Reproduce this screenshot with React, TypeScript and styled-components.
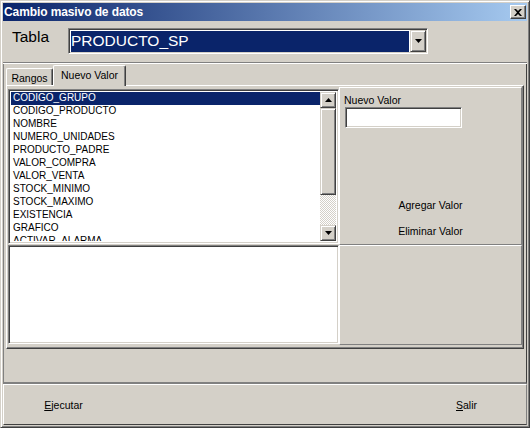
import React from 'react';
import styled, { createGlobalStyle } from 'styled-components';

const FACE = '#d4d0c8';
const SHADOW = '#808080';
const DARK = '#404040';
const LIGHT = '#ffffff';
const NAVY = '#0a246a';
const FONT = '"Liberation Sans", Arial, sans-serif';

const GlobalStyle = createGlobalStyle`
  html, body { margin: 0; padding: 0; background: ${FACE}; }
  body { font-family: ${FONT}; }
  * { box-sizing: border-box; }
`;

const Window = styled.div`
  width: 530px;
  height: 428px;
  background: ${FACE};
  border: 1px solid;
  border-color: ${FACE} ${DARK} ${DARK} ${FACE};
  box-shadow: inset 1px 1px ${LIGHT}, inset -1px -1px ${SHADOW};
  padding: 2px;
  display: flex;
  flex-direction: column;
`;

const TitleBar = styled.div`
  height: 18px;
  flex: none;
  display: flex;
  align-items: center;
  justify-content: space-between;
  padding: 0 1px 0 1px;
  background: linear-gradient(to right, ${NAVY}, #a6caf0);
`;

const TitleText = styled.span`
  color: #fff;
  font: bold 12px ${FONT};
  letter-spacing: -0.1px;
`;

const CloseButton = styled.div`
  width: 16px;
  height: 14px;
  background: ${FACE};
  border: 1px solid;
  border-color: ${LIGHT} ${DARK} ${DARK} ${LIGHT};
  box-shadow: inset -1px -1px ${SHADOW};
  display: flex;
  align-items: center;
  justify-content: center;
`;

const Client = styled.div`
  flex: 1;
  margin-top: 1px;
  display: flex;
  flex-direction: column;
`;

const TopSection = styled.div`
  height: 40px;
  flex: none;
  display: flex;
  align-items: flex-start;
  padding: 6px 0 0 9px;
`;

const BigLabel = styled.div`
  width: 56px;
  height: 26px;
  line-height: 28px;
  font: 15.5px ${FONT};
  color: #000;
`;

const Combo = styled.div`
  width: 360px;
  height: 26px;
  display: flex;
  border: 1px solid;
  border-color: ${SHADOW} ${LIGHT} ${LIGHT} ${SHADOW};
  box-shadow: inset 1px 1px ${DARK}, inset -1px -1px ${FACE};
  padding: 1px;
  background: #fff;
`;

const ComboField = styled.div`
  flex: 1;
  margin: 1px 1px 0 1px;
  background: ${NAVY};
  color: #fff;
  font: 15.5px ${FONT};
  line-height: 20px;
  padding-left: 0;
  white-space: nowrap;
`;

const RaisedButton = styled.div<{ $w?: number; $h?: number }>`
  width: ${(p) => p.$w ?? 16}px;
  height: ${(p) => (p.$h ? `${p.$h}px` : 'auto')};
  flex: none;
  background: ${FACE};
  border: 1px solid;
  border-color: ${FACE} ${DARK} ${DARK} ${FACE};
  box-shadow: inset 1px 1px ${LIGHT}, inset -1px -1px ${SHADOW};
  display: flex;
  align-items: center;
  justify-content: center;
`;

const Groove = styled.div`
  height: 2px;
  flex: none;
  border-top: 1px solid ${SHADOW};
  border-bottom: 1px solid ${LIGHT};
`;

const Middle = styled.div`
  height: 320px;
  flex: none;
  display: flex;
  flex-direction: column;
  border-left: 1px solid ${SHADOW};
  border-right: 1px solid ${DARK};
  border-bottom: 2px solid ${SHADOW};
  padding: 1px 1px 0 2px;
`;

const TabStrip = styled.div`
  height: 20px;
  flex: none;
  display: flex;
  align-items: flex-end;
  position: relative;
  z-index: 1;
`;

const Tab = styled.div<{ $active?: boolean; $w: number }>`
  width: ${(p) => p.$w}px;
  height: ${(p) => (p.$active ? 21 : 17)}px;
  margin-bottom: ${(p) => (p.$active ? -1 : 0)}px;
  background: ${FACE};
  border-top: 1px solid ${LIGHT};
  border-left: 1px solid ${LIGHT};
  border-right: 1px solid ${DARK};
  border-top-left-radius: 2px;
  border-top-right-radius: 2px;
  box-shadow: inset -1px 0 ${SHADOW};
  font: 10.5px ${FONT};
  color: #000;
  display: flex;
  justify-content: center;
  padding-top: 3px;
`;

const TabPanel = styled.div`
  width: 518px;
  height: 264px;
  flex: none;
  border: 1px solid;
  border-color: ${LIGHT} ${DARK} ${DARK} ${LIGHT};
  box-shadow: inset -1px -1px ${SHADOW};
  padding: 1px 2px 2px 1px;
  display: grid;
  grid-template-columns: 331px 183px;
  grid-template-rows: 158px 100px;
`;

const ListBox = styled.div`
  margin-top: 2px;
  height: 155px;
  display: flex;
  background: #fff;
  border: 1px solid;
  border-color: ${SHADOW} ${LIGHT} ${LIGHT} ${SHADOW};
  box-shadow: inset 1px 1px ${DARK}, inset -1px -1px ${FACE};
  padding: 2px;
`;

const ListItems = styled.div`
  flex: 1;
  overflow: hidden;
`;

const ListItem = styled.div<{ $selected?: boolean }>`
  height: 13px;
  line-height: 13px;
  padding-left: 2px;
  font: 10px ${FONT};
  white-space: nowrap;
  color: ${(p) => (p.$selected ? '#fff' : '#000')};
  background: ${(p) => (p.$selected ? NAVY : 'transparent')};
`;

const ScrollBar = styled.div`
  width: 16px;
  flex: none;
  display: flex;
  flex-direction: column;
`;

const Track = styled.div`
  flex: 1;
  background: repeating-conic-gradient(${FACE} 0 25%, ${LIGHT} 0 50%) 0 0 / 2px 2px;
`;

const RaisedCell = styled.div`
  border: 1px solid;
  border-color: ${LIGHT} ${SHADOW} ${SHADOW} ${LIGHT};
  display: flex;
  flex-direction: column;
`;

const ValueCell = styled(RaisedCell)`
  padding: 6px 0 0 4px;
`;

const SmallLabel = styled.div`
  font: 10.5px ${FONT};
  line-height: 12px;
  height: 13px;
  color: #000;
`;

const TextInput = styled.div`
  width: 117px;
  height: 21px;
  margin-left: 1px;
  background: #fff;
  border: 1px solid;
  border-color: ${SHADOW} ${LIGHT} ${LIGHT} ${SHADOW};
  box-shadow: inset 1px 1px ${DARK}, inset -1px -1px ${FACE};
`;

const ActionGroup = styled.div`
  margin-top: auto;
  margin-left: -4px;
  display: flex;
  flex-direction: column;
  align-items: center;
`;

const FlatButton = styled.div<{ $w: number; $h: number }>`
  width: ${(p) => p.$w}px;
  height: ${(p) => p.$h}px;
  display: flex;
  align-items: center;
  justify-content: center;
  font: 10.5px ${FONT};
  color: #000;
`;

const Memo = styled.div`
  height: 99px;
  background: #fff;
  border: 1px solid;
  border-color: ${SHADOW} ${LIGHT} ${LIGHT} ${SHADOW};
  box-shadow: inset 1px 1px ${DARK}, inset -1px -1px ${FACE};
`;

const Spacer = styled.div`
  flex: 1;
`;

const ButtonBar = styled.div`
  flex: 1;
  display: flex;
  align-items: center;
  justify-content: space-between;
  padding: 0 22px 0 22px;
  border-top: 1px solid ${LIGHT};
  border-left: 1px solid ${LIGHT};
  border-right: 1px solid ${SHADOW};
  border-bottom: 1px solid ${DARK};
`;

const Key = styled.span`
  text-decoration: underline;
`;

const Up = () => (
  <svg width="7" height="4" viewBox="0 0 7 4">
    <path d="M3.5 0 L7 4 L0 4 Z" fill="#000" />
  </svg>
);
const Down = () => (
  <svg width="7" height="4" viewBox="0 0 7 4">
    <path d="M0 0 L7 0 L3.5 4 Z" fill="#000" />
  </svg>
);

const items = [
  'CODIGO_GRUPO',
  'CODIGO_PRODUCTO',
  'NOMBRE',
  'NUMERO_UNIDADES',
  'PRODUCTO_PADRE',
  'VALOR_COMPRA',
  'VALOR_VENTA',
  'STOCK_MINIMO',
  'STOCK_MAXIMO',
  'EXISTENCIA',
  'GRAFICO',
  'ACTIVAR_ALARMA',
];

export default function App() {
  return (
    <>
      <GlobalStyle />
      <Window>
        <TitleBar>
          <TitleText>Cambio masivo de datos</TitleText>
          <CloseButton>
            <svg width="8" height="7" viewBox="0 0 8 7">
              <path d="M0 0h2l2 2 2-2h2L5 3.5 8 7H6L4 5 2 7H0l3-3.5z" fill="#000" />
            </svg>
          </CloseButton>
        </TitleBar>
        <Client>
          <TopSection>
            <BigLabel>Tabla</BigLabel>
            <Combo>
              <ComboField>PRODUCTO_SP</ComboField>
              <RaisedButton $w={16}>
                <Down />
              </RaisedButton>
            </Combo>
          </TopSection>
          <Groove />
          <Middle>
            <TabStrip>
              <Tab $w={47}>Rangos</Tab>
              <Tab $w={73} $active>
                Nuevo Valor
              </Tab>
            </TabStrip>
            <TabPanel>
              <ListBox>
                <ListItems>
                  {items.map((it, i) => (
                    <ListItem key={it} $selected={i === 0}>
                      {it}
                    </ListItem>
                  ))}
                </ListItems>
                <ScrollBar>
                  <RaisedButton $w={16} $h={16}>
                    <Up />
                  </RaisedButton>
                  <RaisedButton $w={16} $h={87} />
                  <Track />
                  <RaisedButton $w={16} $h={16}>
                    <Down />
                  </RaisedButton>
                </ScrollBar>
              </ListBox>
              <ValueCell>
                <SmallLabel>Nuevo Valor</SmallLabel>
                <TextInput />
                <ActionGroup>
                  <FlatButton $w={90} $h={26}>Agregar Valor</FlatButton>
                  <FlatButton $w={90} $h={26}>Eliminar Valor</FlatButton>
                </ActionGroup>
              </ValueCell>
              <Memo />
              <RaisedCell />
            </TabPanel>
            <Spacer />
          </Middle>
          <ButtonBar>
            <FlatButton $w={75} $h={26}>
              <span>
                <Key>E</Key>jecutar
              </span>
            </FlatButton>
            <FlatButton $w={75} $h={26}>
              <span>
                <Key>S</Key>alir
              </span>
            </FlatButton>
          </ButtonBar>
        </Client>
      </Window>
    </>
  );
}
